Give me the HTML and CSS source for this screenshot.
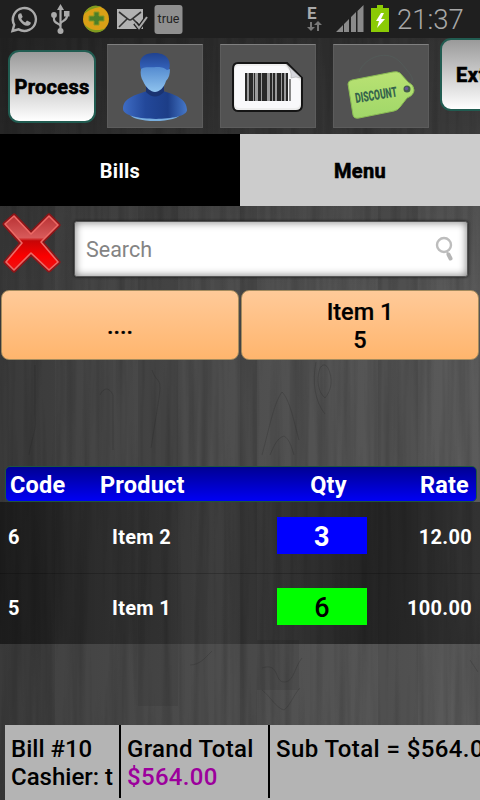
FILE: index.html
```html
<!DOCTYPE html>
<html lang="en">
<head>
    <meta charset="UTF-8">
    <meta name="viewport" content="width=device-width, initial-scale=1.0">
    <title>Bills</title>
    <link rel="stylesheet" href="styles.css">
</head>
<body>
    <!-- Wood background -->
    <svg class="wood" width="480" height="800" aria-hidden="true">
        <defs>
            <filter id="grain" x="0" y="0" width="100%" height="100%">
                <feTurbulence type="fractalNoise" baseFrequency="0.11 0.004" numOctaves="3" seed="8"/>
                <feColorMatrix values="0 0 0 0 0  0 0 0 0 0  0 0 0 0 0  1.6 0 0 0 -0.62"/>
            </filter>
        </defs>
        <rect width="480" height="800" filter="url(#grain)" opacity="0.2"/>
        <!-- Planks -->
        <g fill="#000" opacity="0.07">
            <path d="M0 206h55v594H0zM138 206h40v500h-40zM240 206h17v594h-17zM378 206h40v594h-40zM257 640h42v50h-42z"/>
        </g>
        <g fill="none" stroke="#222" stroke-opacity="0.22">
            <path d="M262 455c8-30 12-52 20-63 8 8 12 30 17 48M270 455c5-12 8-17 14-19 5 3 7 9 10 19"/>
            <path d="M320 368c-4 12-2 24 5 30 7-8 8-20 3-30-3-5-6-3-8 0zM316 362c-4 20-1 40 9 52"/>
            <path d="M100 395c4-8 9-8 13 0v55M152 370c5 15 10 5 7 28l-8 50M35 365v50c2 15-4 25-6 40"/>
            <path d="M262 668c18-6 12 14 22 14s10-14 18-24M262 690c8 6 14 18 22 20 6-4 10-16 16-22M470 660l8 12M190 665c10 0 16-8 22-14"/>
        </g>
    </svg>

    <div class="status">
        <svg width="185" height="38" viewBox="0 0 185 38">
            <path d="M12.500 31l1.700-6.200A11.500 11.500 0 1 1 18.600 29.400z" fill="none" stroke="#aaa" stroke-width="2.400"/>
            <path d="M19.500 13.500c-2 1-2 4 0 7s5 5.500 8 5.300c2 0 3.500-1.600 3.300-3.300l-3.800-2-1.700 2c-2-.8-3.300-2.200-4-4l1.400-1.600-1.500-3.600z" fill="#aaa"/>
            <path d="M60.500 31V9M60.500 26.500c0-3-6.500-3-6.500-7V15M60.500 24c0-3 6.500-3 6.500-8" fill="none" stroke="#aaa" stroke-width="2.200"/>
            <path d="M60.500 4l3.500 6h-7zM64 11h5.500v5.500H64z" fill="#aaa"/>
            <circle cx="54" cy="15" r="2.900" fill="#aaa"/>
            <circle cx="60.500" cy="31" r="3" fill="#aaa"/>
            <circle cx="96" cy="19" r="13" fill="#d9a016"/>
            <path d="M84 14a13 13 0 0 1 18-7c-6 0-12 2-18 7zM84 24c5 6 14 8 22 4a13 13 0 0 1-22-4z" fill="#7f9b20"/>
            <path d="M94 12h5v4h5v5h-5v4h-5v-4h-5v-5h5z" fill="#4c7f28" stroke="#8f9a20"/>
            <path d="M117 9h26v20h-26z" fill="#b2b2b2"/>
            <path d="M119 12l9 7q2 2 4 0l9-7M119 27l8-8M141 27l-8-8" fill="none" stroke="#333" stroke-width="1.600"/>
            <path d="M135 23l4 5 8-11" fill="none" stroke="#222" stroke-width="4.500"/>
            <path d="M135 23l4 5 8-11" fill="none" stroke="#aaa" stroke-width="2"/>
            <rect x="154.500" y="5" width="28" height="29" rx="3" fill="#8f8f8f"/>
            <text x="168.500" y="23" text-anchor="middle" class="true-label">true</text>
        </svg>
        <svg width="92" height="38" viewBox="0 0 92 38">
            <text x="6" y="19" class="edge">E</text>
            <path d="M10 22v7M17 31v-7" stroke="#777" stroke-width="2"/>
            <path d="M6 27h8l-4 4zM13 25h8l-4-4z" fill="#777"/>
            <path d="M35 32l7-7v7zM43 24l5-5v13h-5zM50 17l5-5v20h-5zM56.500 11l6-6v27h-6z" fill="#8a8a8a"/>
            <path d="M70 8h6V5h6v3h6v24H70z" fill="#8bcb05"/>
            <path d="M80 13l-5 8h3l-2 7 8-9h-4l3-6z" fill="#fff"/>
        </svg>
        <span class="clock">21:37</span>
    </div>

    <header class="toolbar">
        <button class="btn">Process</button>
        <button class="tile">
            <svg width="96" height="83" viewBox="0 0 96 83">
                <defs>
                    <linearGradient id="hair" x1="0" y1="0" x2="0" y2="1"><stop offset="0" stop-color="#20428f"/><stop offset="1" stop-color="#3564bd"/></linearGradient>
                    <linearGradient id="face" x1="0" y1="0" x2="0" y2="1"><stop offset="0" stop-color="#548bd0"/><stop offset="1" stop-color="#8fc3ee"/></linearGradient>
                    <linearGradient id="shirt"><stop offset="0" stop-color="#3e6cc4"/><stop offset="0.350" stop-color="#23489a"/><stop offset="0.700" stop-color="#1c3d87"/><stop offset="1" stop-color="#4678c8"/></linearGradient>
                </defs>
                <ellipse cx="48" cy="69" rx="25" ry="7" fill="#78aee0"/>
                <path d="M16 64c0-11 12-14 24-18h16c13 4 24 8 24 19 0 12-64 12-64-1z" fill="url(#shirt)"/>
                <path d="M39 41h18v6q-9 9-18 0z" fill="#1a3371"/>
                <path d="M34 25C30 12 38 8 48 8s17 6 14 17z" fill="url(#hair)"/>
                <path d="M34 24c5-3 10-1 15-2 5 0 7 0 11 3l3-1c0 5-1 9-4 12-2 7-7 11-11 11s-9-4-12-11c-2-3-3-8-2-12z" fill="url(#face)"/>
            </svg>
        </button>
        <button class="tile">
            <svg width="96" height="83" viewBox="0 0 96 83">
                <path d="M18 18h49l15 15v27q0 6-6 6H18q-5 0-5-6V24q0-6 5-6z" fill="#eee" stroke="#151515" stroke-width="2"/>
                <path d="M18 21h47l15 15v22q0 5-5 5H20q-5 0-5-5V25q0-4 3-4z" fill="#f9f9fb"/>
                <path d="M66 19l15 14q-5-2-10 0 1-8-5-14z" fill="#d6d7dd" stroke="#aaa" stroke-width=".6"/>
                <g fill="#292929">
                    <path d="M25 28h2v28h-2zM29 28h4v28h-4zM34 28h1v28h-1zM38 28h3v28h-3zM42 28h5v28h-5zM50 28h2v28h-2zM53 28h2v28h-2zM57 28h4v28h-4zM62 28h2v28h-2zM66 28h2v28h-2z"/>
                    <path d="M25 28h43v28H25z" opacity=".45"/>
                    <path d="M69 34h2v22h-2z" fill="#888"/>
                </g>
            </svg>
        </button>
        <button class="tile">
            <svg width="96" height="83" viewBox="0 0 96 83">
                <defs>
                    <linearGradient id="tag" x1="0" y1="0" x2="0" y2="1"><stop offset="0" stop-color="#b9e273"/><stop offset="1" stop-color="#a0d769"/></linearGradient>
                </defs>
                <path d="M26 27c6-15 29-24 42-9s14 17 7 23" fill="none" stroke="#52605c" stroke-width="1" opacity=".55"/>
                <path d="M19 35l41-8q4-1 7 1l8 9q6 3 6 8t-7 8l-7 9q-2 3-6 4l-35 7q-5 1-6-3l-5-31q0-3 4-4z" fill="url(#tag)" stroke="#8abb54"/>
                <circle cx="74" cy="44" r="3.500" fill="#455d4c"/>
                <circle cx="73.500" cy="43.500" r="1.700" fill="#66569b"/>
                <text x="23" y="58" class="discount" transform="rotate(-9 23 58)" textLength="42" lengthAdjust="spacingAndGlyphs">DISCOUNT</text>
            </svg>
        </button>
        <button class="btn btn-extra">Extra</button>
    </header>

    <nav class="tabs">
        <a class="tab active">Bills</a>
        <a class="tab">Menu</a>
    </nav>

    <div class="search-row">
        <svg class="clear" width="64" height="68" viewBox="0 0 64 68">
            <defs>
                <linearGradient id="red" x1="0" y1="0" x2="0" y2="1"><stop offset="0" stop-color="#b93335"/><stop offset="0.400" stop-color="#d85a5a"/><stop offset="0.460" stop-color="#c70506"/><stop offset="0.750" stop-color="#fb0000"/><stop offset="1" stop-color="#ef1212"/></linearGradient>
            </defs>
            <path d="M5 14L14 6l17 18L49 6l9 9-17 17 17 20-9 8-18-17-17 17-8-8 16-19z" fill="none" stroke="#a30c10" stroke-width="5" stroke-linejoin="round" opacity=".8"/>
            <path d="M5 14L14 6l17 18L49 6l9 9-17 17 17 20-9 8-18-17-17 17-8-8 16-19z" fill="url(#red)" stroke="#ed6965" stroke-width="1.600" stroke-linejoin="round"/>
        </svg>
        <div class="search">
            <span>Search</span>
            <svg width="20" height="28" viewBox="0 0 20 28">
                <circle cx="9" cy="10" r="7" fill="none" stroke="#bdbdbd" stroke-width="2.400"/>
                <path d="M12 17l1.500 3" stroke="#bdbdbd" stroke-width="2"/>
                <path d="M13.500 19.500l2 4" stroke="#b5b5b5" stroke-width="4" stroke-linecap="round"/>
            </svg>
        </div>
    </div>

    <div class="items">
        <button class="item">....</button>
        <button class="item">Item 1<br>5</button>
    </div>

    <div class="bill">
        <div class="bill-head">
            <span>Code</span>
            <span>Product</span>
            <span class="qty-head">Qty</span>
            <span class="rate">Rate</span>
        </div>
        <div class="bill-row">
            <span>6</span>
            <span>Item 2</span>
            <span class="qty">3</span>
            <span class="rate">12.00</span>
        </div>
        <div class="bill-row">
            <span>5</span>
            <span>Item 1</span>
            <span class="qty green">6</span>
            <span class="rate">100.00</span>
        </div>
    </div>

    <footer class="totals">
        <div class="total">Bill #10<br>Cashier: t</div>
        <div class="total">Grand Total<br><span class="amount">$564.00</span></div>
        <div class="total">Sub Total = $564.00</div>
    </footer>
</body>
</html>
```
FILE: styles.css
```css
* {
    box-sizing: border-box;
}

body {
    margin: 0;
    width: 480px;
    height: 800px;
    overflow: hidden;
    position: relative;
    display: flex;
    flex-direction: column;
    font-family: Roboto, sans-serif;
    background: linear-gradient(to bottom, rgba(0, 0, 0, 0.3) 30px, rgba(0, 0, 0, 0) 300px),
        linear-gradient(to right, #3f3f3f, #4d4d4d 45%, #5b5b5b);
}

button {
    font-family: inherit;
    border: 0;
    padding: 0;
    color: #000;
}

svg {
    display: block;
    flex: none;
}

.wood {
    position: absolute;
    top: 0;
    left: 0;
    z-index: -1;
}

/* Status bar */
.status {
    height: 38px;
    flex: none;
    display: flex;
    align-items: center;
    background: #1f1f1f;
}

.status svg + svg {
    margin-left: 116px;
}

.true-label {
    font-size: 12.5px;
    fill: #222;
}

.edge {
    font-size: 17px;
    font-weight: 700;
    fill: #aaa;
}

.clock {
    margin-left: 4px;
    font-size: 27.5px;
    font-weight: 300;
    color: #a8a8a8;
}

/* Toolbar */
.toolbar {
    height: 96px;
    flex: none;
    display: flex;
    align-items: flex-start;
    padding: 6px 0 0 8px;
    background: rgba(0, 0, 0, 0.2);
}

.btn {
    flex: none;
    width: 88px;
    height: 73px;
    margin: 6px 11px 0 0;
    border: 2px solid #215c51;
    border-radius: 11px;
    background: linear-gradient(#9a9a9a, #fff);
    font-size: 20px;
    font-weight: 700;
    letter-spacing: 0.3px;
    -webkit-text-stroke: 0.6px #000;
}

.btn-extra {
    margin: -6px 0 0 -6px;
    padding-left: 14px;
    text-align: left;
    letter-spacing: 0.6px;
}

.tile {
    flex: none;
    width: 96px;
    height: 84px;
    margin-right: 17px;
    background: #525252;
    border: 1px solid #5c5c5c;
    border-top-color: #808080;
}

.tile svg {
    margin: -1px;
}

.discount {
    font-size: 14px;
    font-weight: 900;
    fill: #35634c;
}

/* Tabs */
.tabs {
    height: 72px;
    flex: none;
    display: flex;
}

.tab {
    flex: 1;
    display: flex;
    align-items: center;
    justify-content: center;
    padding-top: 2px;
    background: #ccc;
    color: #000;
    font-size: 20px;
    font-weight: 700;
    letter-spacing: 0.3px;
    -webkit-text-stroke: 0.6px #000;
}

.tab.active {
    background: #000;
    color: #fff;
    -webkit-text-stroke: 0;
}

/* Search */
.search-row {
    height: 84px;
    flex: none;
    display: flex;
    align-items: flex-start;
}

.clear {
    margin-top: 4px;
}

.search {
    width: 394px;
    height: 56px;
    margin: 15px 0 0 10px;
    padding: 0 12px 0 11px;
    display: flex;
    align-items: center;
    justify-content: space-between;
    border: 1px solid #555;
    border-radius: 3px;
    background: #fff;
    box-shadow: inset 0 0 8px #777, 0 0 3px #111;
    color: #848484;
    font-size: 21.5px;
}

/* Item buttons */
.items {
    height: 176px;
    flex: none;
    display: flex;
    align-items: flex-start;
    gap: 2px;
    padding: 0 1px;
}

.item {
    flex: 1;
    height: 70px;
    border: 1px solid #a58b5e;
    border-radius: 8px;
    background: linear-gradient(#ffca99, #ffb56d);
    font-size: 23.5px;
    font-weight: 500;
    line-height: 28px;
    padding-top: 2px;
    -webkit-text-stroke: 0.2px #000;
}

/* Bill table */
.bill {
    height: 259px;
    flex: none;
    color: #fff;
}

.bill-head {
    display: grid;
    grid-template-columns: 90px 183px 91px 1fr;
    align-items: center;
    width: 472px;
    height: 36px;
    margin-left: 5px;
    padding: 2px 7px 0 4px;
    border: 1px solid #1f5540;
    border-radius: 5px;
    background: linear-gradient(#000093, #0000f4);
    font-size: 23.5px;
    font-weight: 700;
    letter-spacing: 0.2px;
}

.bill-row {
    display: grid;
    grid-template-columns: 104px 165px 90px 1fr;
    align-items: center;
    height: 71px;
    padding: 0 8px 2px;
    background: linear-gradient(to right, rgba(0, 0, 0, 0.5), rgba(0, 0, 0, 0.2) 45%, rgba(0, 0, 0, 0.57) 76%, rgba(0, 0, 0, 0.45));
    font-size: 20px;
    font-weight: 700;
    letter-spacing: 0.3px;
}

.bill-row + .bill-row {
    box-shadow: inset 0 1px rgba(0, 0, 0, 0.2);
}

.qty-head {
    text-align: center;
}

.rate {
    text-align: right;
}

.qty {
    height: 37px;
    margin-top: -3px;
    background: #00f;
    font-size: 27px;
    font-weight: 700;
    line-height: 41px;
    text-align: center;
}

.qty.green {
    background: #0f0;
    color: #000;
    font-weight: 500;
}

/* Totals */
.totals {
    flex: none;
    width: 475px;
    height: 75px;
    margin-left: 5px;
    display: flex;
    overflow: hidden;
    background: #b4b4b4;
    font-size: 24px;
    font-weight: 500;
    line-height: 28px;
    white-space: nowrap;
}

.total {
    flex: none;
    height: 73px;
    padding: 10px 6px 0;
    border-right: 2px solid #000;
}

.total:nth-child(1) {
    width: 116px;
}

.total:nth-child(2) {
    width: 149px;
    letter-spacing: 0.3px;
}

.total:last-child {
    border-right: 0;
    letter-spacing: 0.4px;
}

.amount {
    color: #9c009c;
}
```
